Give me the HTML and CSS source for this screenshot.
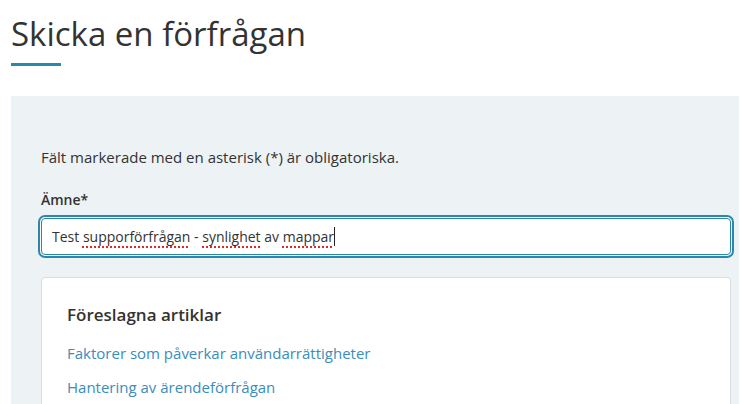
FILE: index.html
```html
<!DOCTYPE html>
<html lang="sv">
<head>
<meta charset="utf-8">
<title>Skicka en förfrågan</title>
<link rel="stylesheet" href="styles.css">
</head>
<body>
<main class="page">
  <h1 class="title">Skicka en förfrågan</h1>
  <div class="title-bar"></div>
  <section class="panel">
    <p class="note">Fält markerade med en asterisk (*) är obligatoriska.</p>
    <label class="label">Ämne*</label>
    <div class="input"><span>Test </span><span class="typo">supporförfrågan</span><span> - </span><span class="typo">synlighet</span><span> av </span><span class="typo">mappar</span><span class="caret"></span></div>
    <div class="card">
      <h2 class="card-title">Föreslagna artiklar</h2>
      <a class="link" href="#">Faktorer som påverkar användarrättigheter</a>
      <a class="link" href="#">Hantering av ärendeförfrågan</a>
    </div>
  </section>
</main>
</body>
</html>
```
FILE: styles.css
```css
html, body {
  margin: 0;
  padding: 0;
  background: #ffffff;
}
body {
  font-family: "Open Sans", "Noto Sans", sans-serif;
  color: #333333;
  overflow: hidden;
}
.page {
  padding: 14px 2px 0 11px;
}
.title {
  margin: 0;
  font-size: 33px;
  line-height: 40px;
  font-weight: 400;
  color: #333333;
}
.title-bar {
  margin-top: 9px;
  width: 50px;
  height: 3px;
  background: #2a89ab;
}
.panel {
  margin-top: 30px;
  background: #edf2f5;
  padding: 51px 8px 40px 30px;
}
.note {
  margin: 0;
  font-size: 15px;
  line-height: 20px;
  color: #333333;
}
.label {
  display: block;
  margin-top: 23px;
  font-size: 14px;
  line-height: 20px;
  font-weight: 600;
  color: #333333;
}
.input {
  margin-top: 8px;
  box-sizing: border-box;
  height: 37px;
  padding: 0 10px;
  background: #ffffff;
  border: 1px solid #2a89ab;
  border-radius: 4px;
  box-shadow: 0 0 0 1px #ffffff, 0 0 0 3px #2a89ab;
  font-size: 14px;
  line-height: 35px;
  color: #333333;
  white-space: nowrap;
}
.typo {
  text-decoration: underline dotted #e0282a;
  text-decoration-thickness: 2px;
  text-underline-offset: 4px;
}
.caret {
  display: inline-block;
  width: 1px;
  height: 19px;
  background: #222222;
  vertical-align: -4px;
}
.card {
  margin-top: 22px;
  background: #ffffff;
  border: 1px solid #dcdfe2;
  border-radius: 4px;
  padding: 25px 25px 30px 25px;
}
.card-title {
  margin: 0 0 16px 0;
  font-size: 17px;
  line-height: 24px;
  font-weight: 600;
  color: #333333;
}
.link {
  display: block;
  font-size: 15px;
  line-height: 20px;
  color: #3a8dbb;
  text-decoration: none;
  margin-bottom: 14px;
}
```
